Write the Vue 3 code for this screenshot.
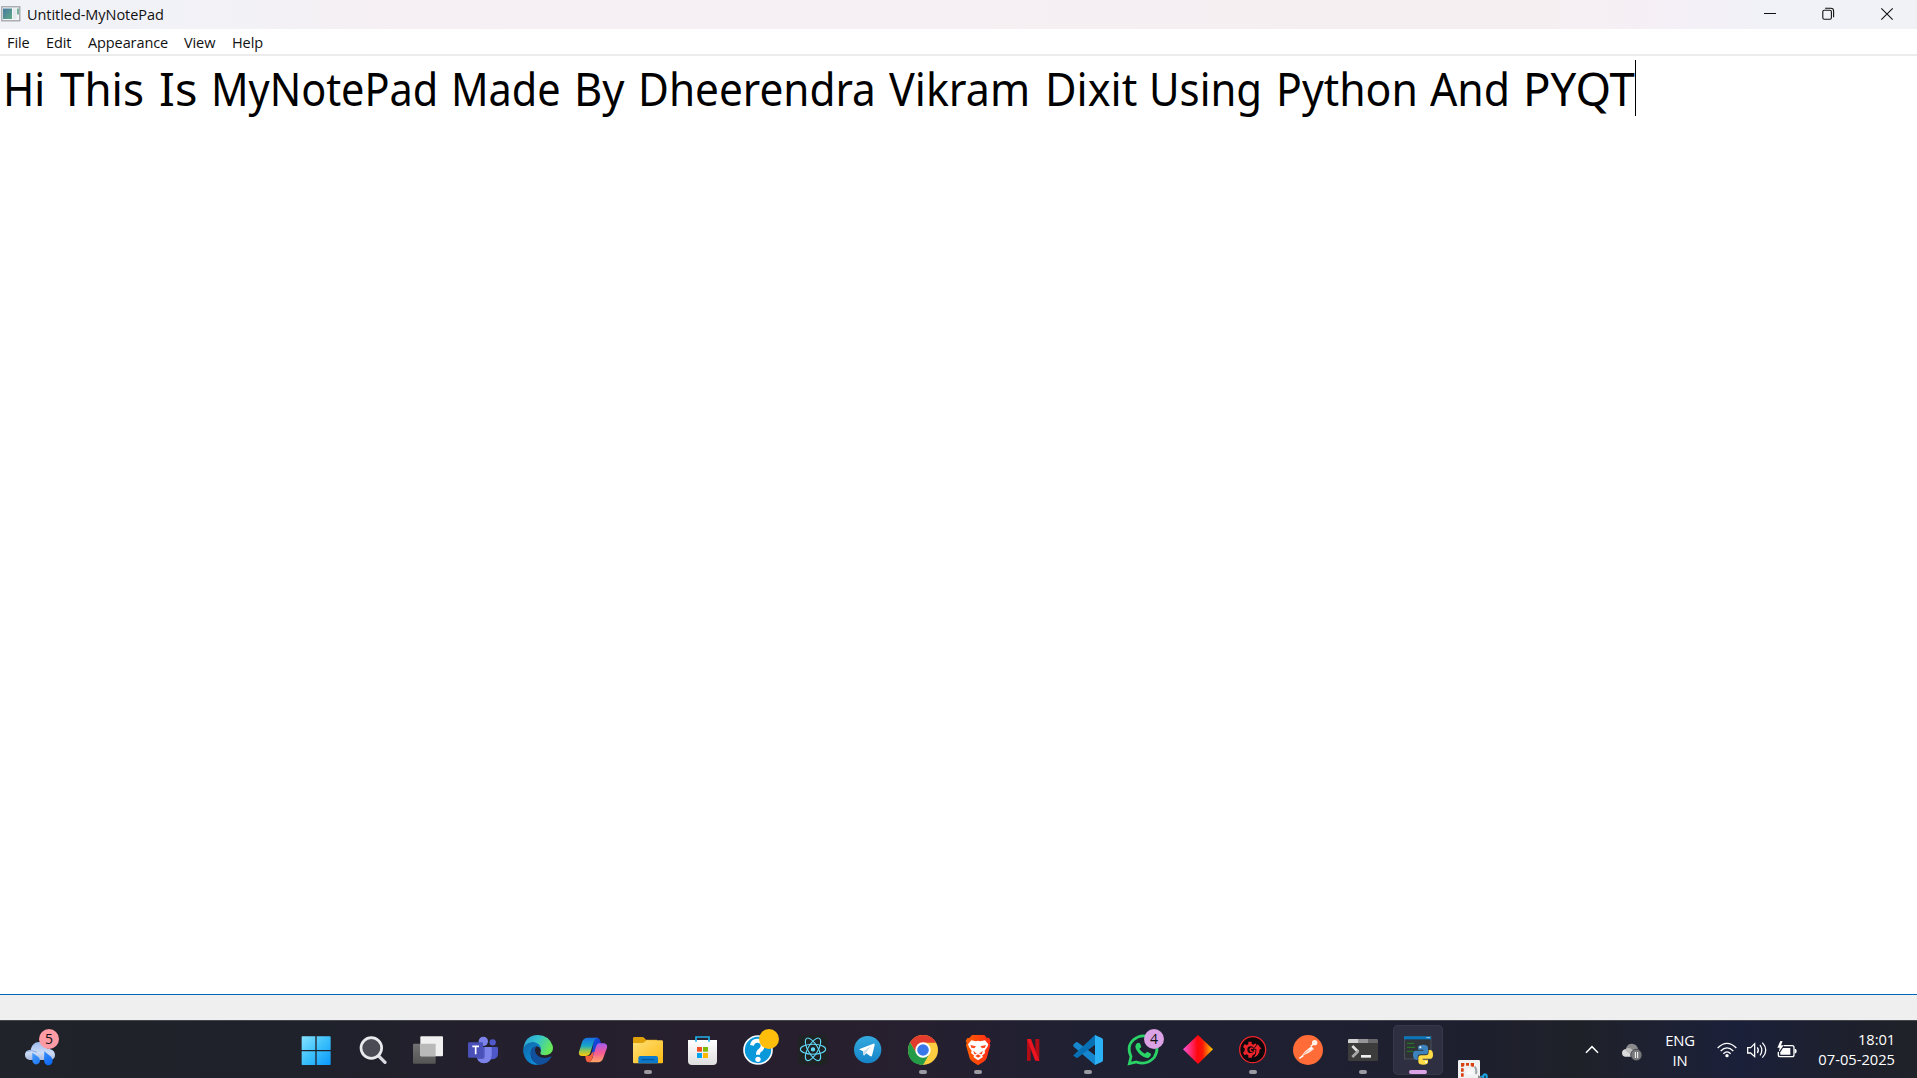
<script setup>
const menus = ['File', 'Edit', 'Appearance', 'View', 'Help']
// advance of each word on the line and its horizontal glyph condensation
const words = [
  { t: 'Hi', w: 57, s: 0.92 }, { t: 'This', w: 98.5, s: 0.955 }, { t: 'Is', w: 52.3, s: 1.02 },
  { t: 'MyNotePad', w: 240.7, s: 0.9 }, { t: 'Made', w: 123, s: 0.9 }, { t: 'By', w: 64, s: 0.945 },
  { t: 'Dheerendra', w: 251, s: 0.92 }, { t: 'Vikram', w: 155.5, s: 0.935 }, { t: 'Dixit', w: 104, s: 0.94 },
  { t: 'Using', w: 127, s: 0.91 }, { t: 'Python', w: 154.5, s: 0.93 }, { t: 'And', w: 92.5, s: 0.93 }, { t: 'PYQT', w: 112, s: 0.99 },
]
</script>

<template>
  <div class="screen">
    <header class="titlebar">
      <svg class="appicon" viewBox="0 0 20 16"><defs><linearGradient id="winicon" x2="1" y2="1"><stop stop-color="#4878a0"/><stop offset="1" stop-color="#5faa85"/></linearGradient></defs><rect x=".8" y=".8" width="18" height="14" fill="#f4f7f8" stroke="#9a9da1" stroke-width="1.2"/><rect x="2" y="2.5" width="9" height="10.5" fill="url(#winicon)"/><rect x="12" y="2.5" width="3.5" height="10.5" fill="#e3e9ed"/><rect x="16" y="2.5" width="2" height="6" fill="#78b29a"/></svg>
      <span class="title">Untitled-MyNotePad</span>
      <div class="controls">
        <svg viewBox="0 0 16 16"><path d="M2 7.5H14" stroke="#111" stroke-width="1"/></svg>
        <svg viewBox="0 0 16 16" fill="none" stroke="#111" stroke-width="1.1"><rect x="1.8" y="4.3" width="8.6" height="9" rx="1.5"/><path d="M4.1 2.3H9.8Q12.6 2.3 12.6 5.1V11.3"/></svg>
        <svg viewBox="0 0 16 16"><path d="M2.3 2.3 13.7 13.7M13.7 2.3 2.3 13.7" stroke="#111" stroke-width="1.1"/></svg>
      </div>
    </header>
    <nav class="menubar"><span v-for="m in menus" :key="m" :class="m.toLowerCase()">{{ m }}</span></nav>
    <main class="editor">
      <span v-for="w in words" :key="w.t" class="word" :style="{ width: w.w + 'px', transform: `scaleX(${w.s})` }">{{ w.t }}</span><i class="caret"></i>
    </main>
    <div class="statusbar"></div>

    <footer class="taskbar">
      <div class="weather">
        <svg viewBox="0 0 90 75"><defs><linearGradient id="cl" x2="0" y2="1"><stop stop-color="#9dbcf0"/><stop offset=".6" stop-color="#cddcf6"/><stop offset="1" stop-color="#a8b9dc"/></linearGradient><linearGradient id="dr" x2="1" y2="1"><stop stop-color="#4aa0ff"/><stop offset="1" stop-color="#0864f0"/></linearGradient></defs><path d="M17 57C6 57 0 50 0 42 0 32 8 27 17 27 20 12 29 3 42 3 57 3 65 12 68 24 81 23 90 31 90 42 90 52 83 57 74 57Z" fill="url(#cl)"/><path d="M3 32Q20 24 36 34" stroke="#8eaadd" stroke-width="3" fill="none"/><path d="M22 35 40 48Q48 57 43 65 37 73 28 69 21 65 22 56ZM58 31 78 47Q86 57 81 67 75 76 64 71 57 67 57 57Z" fill="url(#dr)"/></svg>
        <b class="badge pink">5</b>
      </div>

      <div class="apps">
        <div class="slot start"><svg viewBox="0 0 90 90"><defs><linearGradient id="win" gradientUnits="userSpaceOnUse" x1="0" y1="0" x2="90" y2="90"><stop stop-color="#8ce4ff"/><stop offset=".5" stop-color="#3dc1fb"/><stop offset="1" stop-color="#0a97fb"/></linearGradient></defs><path d="M2 6Q2 4 4 4H43V45H2ZM47 4H87Q89 4 89 6V45H47ZM2 49H43V90H4Q2 90 2 88ZM47 49H89V88Q89 90 87 90H47Z" fill="url(#win)"/></svg></div>
        <div class="slot"><svg viewBox="0 0 90 90"><path d="M63 64 81 82" stroke="#d6d9de" stroke-width="10" stroke-linecap="round"/><circle cx="40" cy="39" r="31" fill="#4b4b55" stroke="#e9eaed" stroke-width="8"/></svg></div>
        <div class="slot"><svg viewBox="0 0 90 90"><defs><linearGradient id="tv" x2="0" y2="1"><stop stop-color="#737373"/><stop offset="1" stop-color="#555"/></linearGradient></defs><rect y="26" width="68" height="60" rx="3" fill="url(#tv)"/><rect x="22" y="4" width="68" height="60" rx="3" fill="#f0f0f0"/><path d="M22 26H68V64H25Q22 64 22 61Z" fill="#b9b9b9"/></svg></div>
        <div class="slot"><svg viewBox="0 0 90 90"><circle cx="74" cy="22" r="9.5" fill="#5059c9"/><path d="M64 36H86Q90 36 90 40V54Q90 72 73 73H64Z" fill="#4f58c8"/><circle cx="46" cy="19" r="14" fill="#7b83eb"/><path d="M28 36H68Q71 36 71 39V60Q70 84 48 85 27 84 26 62Z" fill="#7b83eb"/><path d="M45 36H50V65Q50 72 43 72H28L26 65Z" fill="#5058bd"/><rect y="22" width="45" height="46" rx="4" fill="#4951b8"/><path d="M13 34H33M23 34V58" stroke="#fff" stroke-width="5"/></svg></div>
        <div class="slot"><svg viewBox="0 0 90 90"><defs><linearGradient id="e1" x2="1" y2=".4"><stop stop-color="#2899d5"/><stop offset=".5" stop-color="#35c4cd"/><stop offset="1" stop-color="#67e759"/></linearGradient><linearGradient id="e2" x2=".7" y2="1"><stop stop-color="#1068a8"/><stop offset="1" stop-color="#0d8ddd"/></linearGradient></defs><path d="M1 44Q4 1 45 0 78 1 89 32C94 50 79 63 59 60 50 58 52 53 54 48 56 35 45 25 29 23Q12 23 1 44Z" fill="url(#e1)"/><path d="M0 47Q3 24 28 21C48 22 57 38 54 48Q51 35 41 34 23 36 23 57 25 82 49 89 7 93 0 47Z" fill="url(#e2)"/><path d="M23 57Q24 36 41 34 35 41 36 49 41 68 65 69 76 69 84 64 87 64 83 70 71 88 49 90 26 82 23 57Z" fill="#11509d"/></svg></div>
        <div class="slot"><svg viewBox="0 0 90 90"><defs><linearGradient id="c1" x2="0" y2="1"><stop stop-color="#176fe2"/><stop offset=".45" stop-color="#17a7c7"/><stop offset=".7" stop-color="#8bc657"/><stop offset="1" stop-color="#ffc80a"/></linearGradient><linearGradient id="c2" x2="0" y2="1"><stop stop-color="#a65bef"/><stop offset=".5" stop-color="#f65a93"/><stop offset="1" stop-color="#ffa665"/></linearGradient></defs><path d="M49 8H59Q66 9 69 26H82Q70 24 65 32L57 58 46 65Q37 65 43 45Z" fill="#1447d5"/><path d="M28 8H60Q51 9 47 22L36 56Q32 63 23 63H10Q1 61 3 50L13 19Q18 8 28 8Z" fill="url(#c1)"/><path d="M62 25H79Q89 28 87 38L75 71Q71 81 60 82H33Q40 79 43 70L54 35Q56 27 62 25Z" fill="url(#c2)"/><path d="M22 63H32Q39 61 42 53L48 50 43 69Q39 82 30 82 23 81 22 63Z" fill="#f5603c"/></svg></div>
        <div class="slot on"><svg viewBox="0 0 90 90"><defs><linearGradient id="fo" x2="1" y2="1"><stop stop-color="#ffe077"/><stop offset="1" stop-color="#fdba12"/></linearGradient></defs><path d="M0 10Q0 6 4 6H29Q33 6 39 14H72V35H0Z" fill="#dfa00a"/><path d="M0 24H29Q34 24 40 16H86Q90 16 90 20V82Q90 85 87 85H3Q0 85 0 82Z" fill="url(#fo)"/><path d="M16 85V69Q16 63 22 63H69Q75 63 75 69V85Z" fill="#0b79ce"/><path d="M26 74H64" stroke="#064d8c" stroke-width="3"/></svg></div>
        <div class="slot"><svg viewBox="0 0 90 90"><defs><linearGradient id="st" x2="0" y2="1"><stop stop-color="#fff"/><stop offset="1" stop-color="#dedede"/></linearGradient></defs><path d="M0 15H87V78Q87 90 75 90H12Q0 90 0 78Z" fill="url(#st)"/><path d="M24 20V6H63V20" fill="none" stroke="#22b0e9" stroke-width="5"/><path d="M27 36H42V50H27Z" fill="#f25022"/><path d="M45 36H60V50H45Z" fill="#7fba00"/><path d="M27 54H42V69H27Z" fill="#00a4ef"/><path d="M45 54H60V69H45Z" fill="#ffb900"/></svg></div>
        <div class="slot"><svg viewBox="0 0 90 90"><circle cx="45" cy="45" r="42" fill="#0998da" stroke="#f8fafc" stroke-width="5"/><path d="M27 31Q30 16 44 17 60 18 59 34 58 42 50 47 45 50 45 59" fill="none" stroke="#fff" stroke-width="12"/><circle cx="45" cy="73" r="8" fill="#fff"/><circle cx="78" cy="12" r="30" fill="#ffbd0c"/></svg></div>
        <div class="slot"><svg viewBox="0 0 90 90"><rect width="88" height="89" rx="8" fill="#202323"/><g transform="translate(45 43)" fill="none" stroke="#61dafb" stroke-width="3.2"><circle r="5" fill="#61dafb"/><ellipse rx="38" ry="15"/><ellipse rx="38" ry="15" transform="rotate(60)"/><ellipse rx="38" ry="15" transform="rotate(120)"/></g></svg></div>
        <div class="slot"><svg viewBox="0 0 90 90"><defs><linearGradient id="tg" x2="0" y2="1"><stop stop-color="#34aadf"/><stop offset="1" stop-color="#1583c8"/></linearGradient></defs><circle cx="44" cy="44" r="41" fill="url(#tg)"/><path d="M18 43 61 26Q66 25 65 30L57 62Q55 66 51 63L40 55 34 61Q31 62 31 57L30 49Z" fill="#fff"/><path d="M31 49 54 34 38 53 34 61Q31 61 31 57Z" fill="#c9dce9"/></svg></div>
        <div class="slot on"><svg viewBox="0 0 90 90"><circle cx="45" cy="45" r="45" fill="#ffcd40"/><path d="M45 23H84Q72 0 45 0 20 0 6 22L26 56Z" fill="#e33b2e"/><path d="M6 22 26 56Q34 67 46 67L64 57 45 90Q0 87 0 45 0 33 6 22Z" fill="#249c47"/><circle cx="45" cy="45" r="23" fill="#fff"/><circle cx="45" cy="45" r="17.5" fill="#3978eb"/></svg></div>
        <div class="slot on"><svg viewBox="0 0 90 90"><defs><linearGradient id="br"><stop stop-color="#ff6000"/><stop offset="1" stop-color="#ff2a18"/></linearGradient></defs><path d="M27 0H64L72 9 78 8 83 18 80 25 82 31 71 70Q69 76 62 80L45 91 29 80Q22 76 20 70L9 31 11 25 8 18 13 9 19 9Z" fill="url(#br)"/><path d="M25 16 39 19 45 17 52 19 66 16 76 28 73 36 65 47 66 54 57 62 60 66 45 76 31 66 34 62 24 54 26 47 18 36 15 28Z" fill="#fff"/><path d="M22 30 39 34 34 40 25 38ZM69 30 52 34 57 40 66 38ZM31 47 42 57 34 58ZM59 47 48 57 57 58ZM37 63 45 58 54 63 45 68Z" fill="#fc4b20"/></svg></div>
        <div class="slot"><svg viewBox="0 0 90 90"><path d="M27 12H38V77L27 78ZM52 12H64V78L52 77Z" fill="#b10d16"/><path d="M27 12H39L64 78 51 76Z" fill="#ec1420"/></svg></div>
        <div class="slot on"><svg viewBox="0 0 90 90"><path d="M2 28 9 22Q11 20 14 22L77 69 66 90 2 35Q-1 31 2 28Z" fill="#1687ce"/><path d="M2 60 66 0 76 22 14 68Q11 70 8 67L2 63Q0 61 2 60Z" fill="#0871b6"/><path d="M66 0 86 9Q90 11 90 15V75Q90 79 86 81L66 90Z" fill="#2bb1f5"/></svg></div>
        <div class="slot"><svg viewBox="0 0 90 90"><path d="M4 86 9 65Q-6 34 18 13 45-8 73 13 98 38 78 68 56 92 25 81Z" fill="none" stroke="#29d366" stroke-width="8"/><path d="M29 23 36 25 40 36 34 42Q41 52 51 56L58 50 69 56Q70 64 62 68 53 72 38 60 22 45 22 34 23 27 29 23Z" fill="#29d366"/></svg><b class="badge violet">4</b></div>
        <div class="slot"><svg viewBox="0 0 90 90"><defs><linearGradient id="dm"><stop stop-color="#ff54dc"/><stop offset=".48" stop-color="#ff0710"/><stop offset=".65" stop-color="#fa1806"/><stop offset="1" stop-color="#ffcc00"/></linearGradient></defs><path d="M45 0 90 43 45 87 0 43Z" fill="url(#dm)"/></svg></div>
        <div class="slot on"><svg viewBox="0 0 90 90"><circle cx="44" cy="44" r="39" fill="#0b090b" stroke="#ee242c" stroke-width="4"/><path d="M31 20H41V27L47 29 52 25 57 31 53 37Q58 46 52 56L44 61 41 68H31V61L26 58 20 61 15 53 20 48V40L15 36 20 27 26 31 31 27Z" fill="#ee242c"/><circle cx="38" cy="44" r="10" fill="#0b090b"/><path d="M46 41Q38 37 36 44 37 50 44 50" stroke="#ee242c" stroke-width="4" fill="none"/><path d="M59 26 73 43H66Q67 63 44 70 56 58 54 43H46Z" fill="#ee242c" stroke="#0b090b" stroke-width="2.5"/></svg></div>
        <div class="slot"><svg viewBox="0 0 90 90"><circle cx="45" cy="45" r="45" fill="#ff6c37"/><path d="M23 66 37 48 55 34 63 42 48 53 35 59Z" fill="#fbe8df"/><circle cx="65" cy="23" r="8" fill="#fff0e8"/><path d="M19 70 31 62M53 34 61 28M47 44 57 38" stroke="#fff" stroke-width="4"/><path d="M32 58 49 44" stroke="#f79a77" stroke-width="2"/></svg></div>
        <div class="slot on"><svg viewBox="0 0 90 90"><path d="M0 24H90V74Q90 78 86 78H4Q0 78 0 74Z" fill="#3c3c3d"/><path d="M0 24V16Q0 12 4 12H30V24Z" fill="#d2d1d4"/><path d="M30 12H60V24H30Z" fill="#969599"/><path d="M60 12H86Q90 12 90 16V24H60Z" fill="#67676a"/><path d="M13 33 31 51" stroke="#e0e0e0" stroke-width="8"/><path d="M31 48 13 66" stroke="#a7a7a8" stroke-width="8"/><path d="M39 64H69" stroke="#eee" stroke-width="8"/></svg></div>
        <div class="slot on active"><svg viewBox="0 0 90 90"><rect x="4" y="4" width="80" height="68" fill="#303338" stroke="#596069" stroke-width="2"/><rect x="3" y="4" width="81" height="9" fill="#0875bd"/><path d="M70 8H81" stroke="#9acce9" stroke-width="3"/><path d="M12 25H33M12 37H37M12 49H31" stroke="#268226" stroke-width="3"/><path d="M60 29Q45 29 45 37V44H61V47H38Q30 47 30 59 30 73 39 74H44V66Q44 58 54 58H67Q75 58 75 50V38Q75 29 60 29Z" fill="#3c83bd"/><path d="M61 89Q75 89 75 81V74H59V71H82Q90 71 90 60 90 45 81 45H77V52Q77 61 67 61H54Q46 61 46 69V80Q46 89 61 89Z" fill="#ffdc45"/><circle cx="52" cy="37" r="3" fill="#fff"/><circle cx="69" cy="81" r="3" fill="#fff"/></svg></div>
      </div>

      <svg class="snip" viewBox="0 0 96 54"><path d="M0 4Q0 0 4 0H62Q66 0 66 4V54H0Z" fill="#f0f1f2"/><path d="M9 50V40H17V50ZM9 35V25H17V35ZM9 20V9H19V17H17V20ZM24 9H33V17H24ZM38 9H48V20H40V17H38Z" fill="#d84213"/><path d="M50 20Q57 28 54 42" stroke="#a0a4a9" stroke-width="6" fill="none"/><path d="M26 28H46V44H26Z" fill="#fafafa"/><path d="M60 45 72 54H60Z" fill="#888"/><path d="M73 54Q71 41 81 40 91 41 89 54H83Q84 46 81 46 78 46 79 54ZM67 47H75V52H67Z" fill="#18a6e5"/></svg>

      <div class="tray">
        <svg class="chev" viewBox="0 0 42 27"><path d="M3 23 21 5 39 23" fill="none" stroke="#fff" stroke-width="4.5"/></svg>
        <svg class="cloud" viewBox="0 0 60 54"><path d="M12 16Q18 0 34 3 46 6 48 18 58 23 55 34L35 38 11 22Z" fill="#8a8a8c"/><path d="M9 41Q0 39 0 30 0 20 12 18 23 12 31 22L49 31 42 41Z" fill="#dadada"/><path d="M12 18Q23 12 31 22L41 28 27 36 8 20Z" fill="#bcbcbd"/><circle cx="43" cy="36" r="17" fill="#77787b" stroke="#252833" stroke-width="2"/><path d="M40 27V45M47 27V45" stroke="#fff" stroke-width="3"/></svg>
        <div class="lang"><span>ENG</span><span>IN</span></div>
        <svg class="wifi" viewBox="0 0 60 54"><g fill="none" stroke="#fff" stroke-width="4"><path d="M2 21Q30-7 58 21M11 30Q30 11 49 30M19 38Q30 27 41 38"/></g><circle cx="30" cy="44" r="5" fill="#fff"/></svg>
        <svg class="vol" viewBox="0 0 60 54"><g fill="none" stroke="#fff" stroke-width="3.8"><path d="M2 20H11L23 8V47L11 36H2ZM31 19Q37 28 31 36M39 12Q50 28 39 43M46 5Q67 28 46 50"/></g></svg>
        <svg class="bat" viewBox="0 0 60 54"><path d="M20 14H46Q51 14 51 20V41Q51 47 46 47H9Q4 47 4 41V33" fill="none" stroke="#fff" stroke-width="4"/><path d="M53 24H56Q59 25 59 30 59 36 56 37H53Z" fill="#fff"/><path d="M18 21H40V41H10V34Z" fill="#fff"/><path d="M10 0 1 20H8L5 34 20 13H12L17 1Z" fill="#fff"/></svg>
        <div class="clock"><span class="t">18:01</span><span class="d">07-05-2025</span></div>
      </div>
    </footer>
  </div>
</template>

<style>
body { margin: 0; overflow: hidden; }
</style>
<style scoped>
.screen { width: 1917px; height: 1078px; display: flex; flex-direction: column; background: #fff; font-family: "Open Sans", "Noto Sans", sans-serif; overflow: hidden; color: #111; }
svg { display: block; overflow: visible; flex: none; }
.titlebar { height: 29px; flex: none; display: flex; align-items: center; box-sizing: border-box; padding-bottom: 1px; background: linear-gradient(90deg, #f0f2f7 0, #f2f2f7 220px, #f6eff3 420px, #f6eff2 1550px, #f5eff6 1660px, #f0f2f7 1780px, #f0f2f6); }
.appicon { width: 20px; height: 16px; margin-left: 1px; }
.title { font-size: 14.5px; line-height: 20px; margin: 2px 0 0 6px; letter-spacing: -.05px; white-space: nowrap; }
.controls { margin-left: auto; display: flex; gap: 42.5px; padding-right: 22px; }
.controls svg { width: 16px; height: 16px; }
.menubar { height: 25px; flex: none; display: flex; font-size: 14.5px; padding-left: 7px; border-bottom: 2px solid #ececec; line-height: 27px; letter-spacing: -.1px; }
.menubar span { flex: none; height: 25px; }
.file { width: 39px; } .edit { width: 42px; } .appearance { width: 96px; } .view { width: 48px; }
.editor { flex: 1; min-height: 0; display: flex; padding: 4px 0 0 3px; font: 46px/56px "Noto Sans", sans-serif; color: #000; align-items: flex-start; }
.word { flex: none; white-space: nowrap; transform-origin: 0 50%; }
.caret { width: 1px; height: 56px; background: #000; flex: none; }
.statusbar { height: 25px; flex: none; background: #efefef; border-top: 1px solid #0067b8; }
.taskbar { height: 58px; flex: none; display: flex; position: relative; box-sizing: border-box; border-top: 1px solid #44474d; background: linear-gradient(90deg, #202329 0, #1f212b 320px, #251f2d 560px, #281f2e 850px, #1f2032 1080px, #1e1f2f 1450px, #1f2129 1580px, #1b203a 1740px, #1d202e 1830px, #1f2228); color: #fff; }
.weather { width: 288.5px; flex: none; position: relative; }
.weather > svg { width: 30px; height: 25px; margin: 20px 0 0 25px; }
.badge { position: absolute; width: 20px; height: 20px; border-radius: 50%; color: #111; font: 14px/20px "Open Sans", sans-serif; text-align: center; }
.pink { background: #ff9ba4; left: 39px; top: 8px; }
.violet { background: #dba2e5; left: 28.5px; top: 8px; }
.apps { display: flex; flex: none; }
.slot { width: 55px; height: 57px; position: relative; display: flex; justify-content: center; padding-top: 14px; box-sizing: border-box; z-index: 0; }
.start { margin-right: 2px; }
.slot > svg { width: 30px; height: 30px; }
.on::after { content: ""; position: absolute; left: 23.5px; top: 49px; width: 8px; height: 4px; border-radius: 2px; background: #9b9aa1; }
.active::before { content: ""; position: absolute; left: 2.5px; top: 4px; width: 50px; height: 50px; border-radius: 5px; background: #2e2f40; box-shadow: inset 0 0 0 1px #37384a; z-index: -1; box-sizing: border-box; }
.active.on::after { left: 18.5px; width: 18px; background: #dba2e5; }
.snip { width: 32px; height: 18px; margin: 39px 0 0 12.5px; }
.tray { margin-left: auto; display: flex; width: 332px; flex: none; align-items: flex-start; }
.chev { width: 14px; height: 9px; margin: 24px 0 0; }
.cloud { width: 20px; height: 18px; margin: 22px 0 0 23px; }
.lang { width: 50px; margin: 9px 0 0 13px; display: flex; flex-direction: column; align-items: center; font-size: 14.8px; line-height: 20px; letter-spacing: -.2px; }
.wifi, .vol, .bat { width: 20px; height: 18px; margin-top: 20px; }
.wifi { margin-left: 12px; } .vol { margin-left: 10px; } .bat { margin-left: 10px; }
.clock { display: flex; flex-direction: column; align-items: flex-end; margin: 8px 22px 0 auto; font-size: 14.7px; line-height: 20px; }
.t { letter-spacing: -.1px; }
</style>
